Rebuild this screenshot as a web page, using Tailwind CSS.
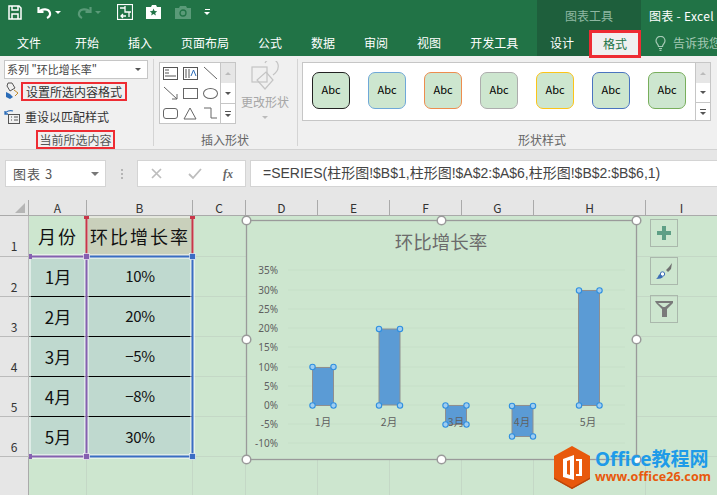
<!DOCTYPE html>
<html lang="zh-CN">
<head>
<meta charset="UTF-8">
<title>图表工具 - Excel</title>
<script src="https://cdn.jsdelivr.net/npm/@tailwindcss/browser@4"></script>
</head>
<body class="w-[717px] h-[495px] overflow-hidden bg-[#e6e6e6] font-['Noto_Sans_CJK_SC','Noto_Sans',sans-serif] text-[#444]">

<!-- title bar + tabs -->
<header class="relative h-[56px] bg-[#217346] text-white">
  <div class="flex items-center h-[28px] pb-[4px] pl-[8px]">
    <svg class="w-[14px] h-[15px]" viewBox="0 0 14 15" fill="none" stroke="#fff" stroke-width="1.5"><path d="M1 1h10l2 2v11H1z"/><path d="M4 1v4h6V1M4 14V9h6v5"/></svg>
    <svg class="ml-[15px] w-[15px] h-[13px]" viewBox="0 0 15 13" fill="none" stroke="#fff" stroke-width="2.2"><path d="M1.500 1v5h5"/><path d="M2 6c3-4 10-3.500 11 1 .4 2-1 4-3 5"/></svg>
    <span class="ml-[3px] border-x-[3px] border-t-[3px] border-x-transparent border-t-white"></span>
    <svg class="ml-[16px] w-[15px] h-[13px]" viewBox="0 0 15 13" fill="none" stroke="#5a9a78" stroke-width="2.200"><path d="M13.500 1v5h-5"/><path d="M13 6C10 2 3 2.500 2 7c-.4 2 1 4 3 5"/></svg>
    <span class="ml-[3px] border-x-[3px] border-t-[3px] border-x-transparent border-t-[#5a9a78]"></span>
    <svg class="ml-[16px] w-[16px] h-[16px]" viewBox="0 0 16 16" fill="none" stroke="#fff"><rect x=".5" y=".5" width="15" height="15" stroke-width="1.200"/><path d="M3 4h5M8 2v6h6M12 8v5M9 12H4m2-2-2 2 2 2" stroke-width="1.300"/></svg>
    <svg class="ml-[13px] w-[15px] h-[14px]" viewBox="0 0 15 14"><path fill="#fff" d="M0 2h5l1-2h4l1 2h4v12H0z"/><path fill="#217346" d="m7.500 3.500 1.100 2.500 2.600.2-2 1.700.7 2.600-2.400-1.400-2.300 1.400.6-2.600-2-1.700 2.700-.2z"/></svg>
    <svg class="ml-[14px] w-[16px] h-[13px]" viewBox="0 0 16 13"><path fill="#5a9a78" d="M0 2h4l1-2h6l1 2h4v11H0z"/><circle cx="8" cy="7" r="3" fill="none" stroke="#217346" stroke-width="1.300"/></svg>
    <span class="ml-[13px] flex flex-col items-center gap-[2px]"><span class="w-[5px] h-px bg-white"></span><span class="border-x-[3px] border-t-[3px] border-x-transparent border-t-white"></span></span>
  </div>
  <nav class="flex h-[28px] text-[12px] leading-[30px] relative">
    <span class="ml-[17px]">文件</span>
    <span class="ml-[34px]">开始</span>
    <span class="ml-[29px]">插入</span>
    <span class="ml-[29px]">页面布局</span>
    <span class="ml-[29px]">公式</span>
    <span class="ml-[29px]">数据</span>
    <span class="ml-[29px]">审阅</span>
    <span class="ml-[29px]">视图</span>
    <span class="ml-[29px]">开发工具</span>
  </nav>
  <!-- contextual chart tools -->
  <div class="absolute left-[537px] top-0 w-[104px] h-[56px] bg-[#1e5f3c]">
    <div class="h-[30px] pl-[28px] text-[12px] leading-[31px] text-[#8fb8a2]">图表工具</div>
    <div class="flex text-[12px]">
      <span class="ml-[13px] leading-[26px]">设计</span>
      <span class="ml-[15px] w-[52px] h-[28px] bg-[#f0f0f0] border-[3px] border-[#ee2c33] text-[#217346] text-center leading-[22px]">格式</span>
    </div>
  </div>
  <div class="absolute left-[649px] top-[8px] text-[12px] leading-[16px] tracking-[.3px] whitespace-nowrap">图表 - Excel</div>
  <div class="absolute left-[655px] top-[35px] flex items-center gap-[7px] text-[12px] leading-[16px] text-[#a5c9b5] whitespace-nowrap">
    <svg class="w-[11px] h-[15px] shrink-0" viewBox="0 0 11 15" fill="none" stroke="#a5c9b5" stroke-width="1.200"><path d="M3.500 10.500C3.500 8 1 7.500 1 4.800a4.500 4.500 0 0 1 9 0c0 2.700-2.500 3.200-2.500 5.700zM4 12.500h3M4.500 14.300h2"/></svg>
    <span>告诉我您</span>
  </div>
</header>

<!-- ribbon -->
<section class="h-[94px] bg-[#f0f0f0] border-b border-[#d2d2d2] flex text-[12px] text-[#444]">
  <div class="w-[154px] shrink-0 border-r border-[#d4d4d4] my-[3px] pl-[4px] flex flex-col">
    <div class="w-[144px] h-[21px] mt-[1px] bg-white border border-[#c6c6c6] flex items-center justify-between pl-[2px] pr-[6px] text-[11px] whitespace-nowrap">
      <span>系列 "环比增长率"</span>
      <span class="border-x-[3px] border-t-[3px] border-x-transparent border-t-[#555]"></span>
    </div>
    <div class="flex items-center h-[19px] mt-[3px]">
      <svg class="w-[16px] h-[18px] shrink-0" viewBox="0 0 16 18"><path fill="none" stroke="#555" d="M4 1l4 0 3 5-5 3-3-5z"/><path fill="#2b6cb8" d="M2 10l4 2 3 3-3 2-4-2z"/><path fill="none" stroke="#c08a2a" d="M10 8l4 3-3 3"/></svg>
      <span class="ml-px h-[19px] px-[3px] border-2 border-[#ee2c33] leading-[16px] whitespace-nowrap text-[#333]">设置所选内容格式</span>
    </div>
    <div class="flex items-center h-[19px] mt-[6px]">
      <svg class="w-[16px] h-[15px] shrink-0" viewBox="0 0 16 15" fill="none"><path stroke="#2b6cb8" stroke-width="1.300" d="M1 5c1-3 5-4 8-3M1 2v3h3"/><rect x="4.500" y="5.500" width="11" height="9" stroke="#555"/><path stroke="#555" d="M7 8h1m2 0h4M7 11h1m2 0h4"/></svg>
      <span class="ml-[5px] leading-[19px] whitespace-nowrap text-[#333]">重设以匹配样式</span>
    </div>
    <div class="mt-[4px] ml-[32px] w-[79px] h-[19px] border-2 border-[#ee2c33] text-center leading-[16px] whitespace-nowrap text-[#555]">当前所选内容</div>
  </div>

  <div class="w-[144px] shrink-0 border-r border-[#d4d4d4] my-[3px] pl-[5px] relative">
    <div class="mt-[3px] flex">
      <div class="w-[62px] h-[62px] bg-white border border-[#c6c6c6] grid grid-cols-3 grid-rows-3 place-items-center">
        <svg class="w-[15px] h-[13px]" viewBox="0 0 15 13" fill="none" stroke="#555"><rect x=".5" y=".5" width="14" height="12"/><path d="M2 3h4M2 6h4M2 9h11"/></svg>
        <svg class="w-[15px] h-[13px]" viewBox="0 0 15 13" fill="none" stroke="#555"><rect x=".5" y=".5" width="14" height="12"/><path d="M3 2v9M6 2v9" /><path stroke="#2b6cb8" d="M8 9l2.500-6L13 9"/></svg>
        <svg class="w-[15px] h-[14px]" viewBox="0 0 15 14" fill="none" stroke="#666"><path d="M1 1l13 12"/></svg>
        <svg class="w-[15px] h-[14px]" viewBox="0 0 15 14" fill="none" stroke="#666"><path d="M1 1l13 12M9 13h5V8"/></svg>
        <span class="w-[15px] h-[11px] border border-[#666]"></span>
        <span class="w-[15px] h-[11px] border border-[#666] rounded-[50%]"></span>
        <span class="w-[15px] h-[11px] border border-[#666] rounded-[3px]"></span>
        <svg class="w-[14px] h-[13px]" viewBox="0 0 14 13" fill="none" stroke="#666"><path d="M7 1l6 11H1z"/></svg>
        <svg class="w-[15px] h-[12px]" viewBox="0 0 15 12" fill="none" stroke="#666"><path d="M1 1h7v10h6"/></svg>
      </div>
      <div class="w-[15px] h-[62px] bg-white border border-l-0 border-[#c6c6c6] flex flex-col">
        <span class="h-[20px] bg-[#e6e6e6] flex items-center justify-center"><span class="border-x-[3px] border-b-[3px] border-x-transparent border-b-[#bbb]"></span></span>
        <span class="h-[21px] border-b border-[#c6c6c6] flex items-center justify-center"><span class="border-x-[3px] border-t-[3px] border-x-transparent border-t-[#555]"></span></span>
        <span class="flex-1 flex flex-col items-center justify-center gap-[2px]"><span class="w-[6px] h-px bg-[#555]"></span><span class="border-x-[3px] border-t-[3px] border-x-transparent border-t-[#555]"></span></span>
      </div>
      <div class="ml-[3px] w-[52px] flex flex-col items-center text-[#a6a6a6]">
        <svg class="w-[30px] h-[30px] mt-[-1px]" viewBox="0 0 30 30" fill="none" stroke="#c4c4c4" stroke-width="1.200"><rect x="2" y="6" width="15" height="15"/><path d="M15 2a7 7 0 0 1 13 5c0 3-5 7-5 7M16 11l7 8-8 9-8-9z"/></svg>
        <span class="mt-[3px] leading-[16px] whitespace-nowrap">更改形状</span>
        <span class="mt-[6px] border-x-[3px] border-t-[3px] border-x-transparent border-t-[#bbb]"></span>
      </div>
    </div>
    <div class="mt-[7px] pl-[42px] leading-[18px] text-[#666]">插入形状</div>
  </div>

  <div class="pl-[4px] my-[3px] flex-1">
    <div class="mt-[3px] flex">
      <div class="w-[394px] h-[59px] bg-white border border-[#c6c6c6] flex items-center gap-[18px] pl-[9px] pb-[3px]">
        <span class="w-[38px] h-[37px] rounded-[7px] bg-[#cde6cf] border-[1.5px] border-[#222] text-[11px] text-center leading-[33px] text-black">Abc</span>
        <span class="w-[38px] h-[37px] rounded-[7px] bg-[#cde6cf] border-[1.5px] border-[#6fa8d8] text-[11px] text-center leading-[33px] text-black">Abc</span>
        <span class="w-[38px] h-[37px] rounded-[7px] bg-[#cde6cf] border-[1.5px] border-[#ed8d4f] text-[11px] text-center leading-[33px] text-black">Abc</span>
        <span class="w-[38px] h-[37px] rounded-[7px] bg-[#cde6cf] border-[1.5px] border-[#adadad] text-[11px] text-center leading-[33px] text-black">Abc</span>
        <span class="w-[38px] h-[37px] rounded-[7px] bg-[#cde6cf] border-[1.5px] border-[#fcc419] text-[11px] text-center leading-[33px] text-black">Abc</span>
        <span class="w-[38px] h-[37px] rounded-[7px] bg-[#cde6cf] border-[1.5px] border-[#4a74c0] text-[11px] text-center leading-[33px] text-black">Abc</span>
        <span class="w-[38px] h-[37px] rounded-[7px] bg-[#cde6cf] border-[1.5px] border-[#78ae5c] text-[11px] text-center leading-[33px] text-black">Abc</span>
      </div>
      <div class="w-[15px] h-[59px] bg-white border border-l-0 border-[#c6c6c6] flex flex-col">
        <span class="h-[20px] bg-[#e6e6e6] flex items-center justify-center"><span class="border-x-[3px] border-b-[3px] border-x-transparent border-b-[#bbb]"></span></span>
        <span class="h-[20px] border-b border-[#c6c6c6] flex items-center justify-center"><span class="border-x-[3px] border-t-[3px] border-x-transparent border-t-[#555]"></span></span>
        <span class="flex-1 flex flex-col items-center justify-center gap-[2px]"><span class="w-[6px] h-px bg-[#555]"></span><span class="border-x-[3px] border-t-[3px] border-x-transparent border-t-[#555]"></span></span>
      </div>
    </div>
    <div class="mt-[10px] pl-[216px] leading-[18px] text-[#666]">形状样式</div>
  </div>
</section>

<!-- formula bar -->
<section class="h-[50px] pt-[10px] pl-[5px] flex text-[#555]">
  <div class="w-[101px] h-[27px] bg-white border border-[#d4d4d4] flex items-center justify-between pl-[7px] pr-[6px] text-[13px] tracking-[1px]">
    <span>图表 3</span>
    <span class="border-x-[4px] border-t-[4px] border-x-transparent border-t-[#777]"></span>
  </div>
  <div class="w-[31px] h-[27px] flex flex-col items-center justify-center gap-[2px]">
    <span class="w-[2px] h-[2px] bg-[#b5b5b5]"></span><span class="w-[2px] h-[2px] bg-[#b5b5b5]"></span><span class="w-[2px] h-[2px] bg-[#b5b5b5]"></span>
  </div>
  <div class="w-[109px] h-[27px] bg-white border border-[#d4d4d4] flex items-center pl-[13px]">
    <svg class="w-[11px] h-[11px]" viewBox="0 0 11 11" stroke="#bdbdbd" stroke-width="1.700"><path d="M1 1l9 9M10 1l-9 9"/></svg>
    <svg class="ml-[26px] w-[14px] h-[12px]" viewBox="0 0 14 12" fill="none" stroke="#bdbdbd" stroke-width="1.800"><path d="M1 6l4 4 8-9"/></svg>
    <span class="ml-[21px] font-['Liberation_Serif',serif] italic font-bold text-[12px] text-[#666]">fx</span>
  </div>
  <div class="ml-[4px] flex-1 h-[27px] bg-white border border-r-0 border-[#d4d4d4] pl-[12px] text-[14px] leading-[25px] whitespace-nowrap overflow-hidden text-[#444] font-['Liberation_Sans','Noto_Sans_CJK_SC',sans-serif]">=SERIES(柱形图!$B$1,柱形图!$A$2:$A$6,柱形图!$B$2:$B$6,1)</div>
</section>

<!-- sheet -->
<section class="relative h-[295px] bg-[#cde6cf]">
  <div class="grid grid-cols-[29px_58px_106px_53px_72px_72px_72px_72px_112px_71px] grid-rows-[16px_41px_40px_40px_40px_40px_40px_38px] h-full text-[#333]">
    <!-- header row -->
    <div class="bg-[#e6e6e6] border-b border-r border-[#aaa] relative"><span class="absolute right-[3px] bottom-[2px] border-l-[10px] border-b-[10px] border-l-transparent border-b-[#b5b5b5]"></span></div>
    <div class="bg-[#e6e6e6] border-b border-r border-[#aaa] text-center text-[12px] leading-[16px]">A</div>
    <div class="bg-[#e6e6e6] border-b border-r border-[#aaa] text-center text-[12px] leading-[16px]">B</div>
    <div class="bg-[#e6e6e6] border-b border-r border-[#aaa] text-center text-[12px] leading-[16px]">C</div>
    <div class="bg-[#e6e6e6] border-b border-r border-[#aaa] text-center text-[12px] leading-[16px]">D</div>
    <div class="bg-[#e6e6e6] border-b border-r border-[#aaa] text-center text-[12px] leading-[16px]">E</div>
    <div class="bg-[#e6e6e6] border-b border-r border-[#aaa] text-center text-[12px] leading-[16px]">F</div>
    <div class="bg-[#e6e6e6] border-b border-r border-[#aaa] text-center text-[12px] leading-[16px]">G</div>
    <div class="bg-[#e6e6e6] border-b border-r border-[#aaa] text-center text-[12px] leading-[16px]">H</div>
    <div class="bg-[#e6e6e6] border-b border-[#aaa] text-center text-[12px] leading-[16px]">I</div>

    <!-- row 1 -->
    <div class="bg-[#e6e6e6] border-b border-r border-[#bbb] text-center text-[12px] leading-[60px]">1</div>
    <div class="flex items-center justify-center text-[18px] tracking-[2px] text-[#111]">月份</div>
    <div class="bg-[#c9d0bb] flex items-center justify-center text-[18px] tracking-[2px] text-[#111] whitespace-nowrap">环比增长率</div>
    <div class="col-span-7 border-b border-[#c4d8c6]"></div>

    <!-- row 2 -->
    <div class="bg-[#e6e6e6] border-b border-r border-[#bbb] text-center text-[12px] leading-[60px]">2</div>
    <div class="bg-[#bfd9cf] border-b border-black flex items-center justify-center text-[17px] text-[#111]">1月</div>
    <div class="bg-[#bfd9cf] border-b border-black flex items-center justify-center text-[15px] tracking-[-.3px] text-[#111]">10%</div>
    <div class="col-span-7 border-b border-[#c4d8c6]"></div>

    <!-- row 3 -->
    <div class="bg-[#e6e6e6] border-b border-r border-[#bbb] text-center text-[12px] leading-[60px]">3</div>
    <div class="bg-[#bfd9cf] border-b border-black flex items-center justify-center text-[17px] text-[#111]">2月</div>
    <div class="bg-[#bfd9cf] border-b border-black flex items-center justify-center text-[15px] tracking-[-.3px] text-[#111]">20%</div>
    <div class="col-span-7 border-b border-[#c4d8c6]"></div>

    <!-- row 4 -->
    <div class="bg-[#e6e6e6] border-b border-r border-[#bbb] text-center text-[12px] leading-[60px]">4</div>
    <div class="bg-[#bfd9cf] border-b border-black flex items-center justify-center text-[17px] text-[#111]">3月</div>
    <div class="bg-[#bfd9cf] border-b border-black flex items-center justify-center text-[15px] tracking-[-.3px] text-[#111]">−5%</div>
    <div class="col-span-7 border-b border-[#c4d8c6]"></div>

    <!-- row 5 -->
    <div class="bg-[#e6e6e6] border-b border-r border-[#bbb] text-center text-[12px] leading-[60px]">5</div>
    <div class="bg-[#bfd9cf] border-b border-black flex items-center justify-center text-[17px] text-[#111]">4月</div>
    <div class="bg-[#bfd9cf] border-b border-black flex items-center justify-center text-[15px] tracking-[-.3px] text-[#111]">−8%</div>
    <div class="col-span-7 border-b border-[#c4d8c6]"></div>

    <!-- row 6 -->
    <div class="bg-[#e6e6e6] border-b border-r border-[#bbb] text-center text-[12px] leading-[60px]">6</div>
    <div class="bg-[#bfd9cf] flex items-center justify-center text-[17px] text-[#111]">5月</div>
    <div class="bg-[#bfd9cf] flex items-center justify-center text-[15px] tracking-[-.3px] text-[#111]">30%</div>
    <div class="col-span-7 border-b border-[#c4d8c6]"></div>

    <!-- below the table -->
    <div class="bg-[#e6e6e6] border-r border-[#aaa]"></div>
    <div class="border-r border-[#c4d8c6]"></div>
    <div class="border-r border-[#c4d8c6]"></div>
    <div class="border-r border-[#c4d8c6]"></div>
    <div class="border-r border-[#c4d8c6]"></div>
    <div class="border-r border-[#c4d8c6]"></div>
    <div class="border-r border-[#c4d8c6]"></div>
    <div class="border-r border-[#c4d8c6]"></div>
    <div class="border-r border-[#c4d8c6]"></div>
    <div></div>
  </div>

  <!-- range highlight lines, y counted from the top of the sheet (y=200) -->
  <svg class="absolute left-0 top-0 w-[717px] h-[295px]" viewBox="0 0 717 295" fill="none">
    <path d="M87 17v40M193 17v40M87 17h106" stroke="#fff" stroke-width="1"/>
    <path d="M30 55h56M30 58h56M88 55h104M88 58h104M30 255h163M30 258h163M85 58v197M88 58v197M191 58v197M194 58v197M30 58v197" stroke="#fff" stroke-width="1"/>
    <path d="M86.500 18v38M192.500 18v38" stroke="#c8374a" stroke-width="2"/>
    <path d="M30 56.500h56M30 256.500h56M86.500 57v199" stroke="#8560b0" stroke-width="2"/>
    <path d="M88 56.500h104M192.500 56v200M88 256.500h104" stroke="#3a6cc4" stroke-width="2"/>
    <rect x="84" y="16" width="5" height="3" fill="#c8374a"/><rect x="190" y="16" width="5" height="3" fill="#c8374a"/>
    <rect x="83.500" y="53.500" width="6" height="6" fill="#8560b0" stroke="#fff" stroke-width=".6"/>
    <rect x="189.500" y="53.500" width="6" height="6" fill="#3a6cc4" stroke="#fff" stroke-width=".6"/>
    <rect x="29" y="54" width="3" height="5" fill="#8560b0"/>
    <rect x="29" y="254" width="3" height="5" fill="#8560b0"/>
    <rect x="83.500" y="253.500" width="6" height="6" fill="#8560b0" stroke="#fff" stroke-width=".6"/>
    <rect x="189.500" y="253.500" width="6" height="6" fill="#3a6cc4" stroke="#fff" stroke-width=".6"/>
  </svg>

  <!-- chart, free canvas in page coordinates -->
  <svg class="absolute left-[240px] top-[15px] w-[404px] h-[250px] font-['Noto_Sans','Noto_Sans_CJK_SC',sans-serif]" viewBox="240 215 404 250">
    <rect x="246.500" y="220.500" width="390" height="239" fill="#cde6cf" stroke="#9a9a9a" stroke-width="1.300"/>
    <g stroke="#c6dfc8">
      <path d="M288 270h337M288 290h337M288 309h337M288 328h337M288 347h337M288 367h337M288 386h337M288 424h337M288 443h337M288 405h337"/>
    </g>
    <text x="441" y="249" text-anchor="middle" font-size="18.500" fill="#6b6b6b" font-family="Noto Sans CJK SC">环比增长率</text>
    <g font-size="10" fill="#5f5f5f" text-anchor="end">
      <text x="278" y="274">35%</text><text x="278" y="294">30%</text><text x="278" y="313">25%</text><text x="278" y="332">20%</text><text x="278" y="351">15%</text><text x="278" y="371">10%</text><text x="278" y="390">5%</text><text x="278" y="409">0%</text><text x="278" y="428">-5%</text><text x="278" y="447">-10%</text>
    </g>
    <g fill="#5b9bd5" stroke="#8f8f8f" stroke-width="1">
      <rect x="312.500" y="367.500" width="21" height="38"/>
      <rect x="379" y="329" width="21" height="76"/>
      <rect x="445.500" y="405.500" width="21" height="19"/>
      <rect x="512" y="405.500" width="21" height="31"/>
      <rect x="578.500" y="290.500" width="21" height="115"/>
    </g>
    <g font-size="10.500" fill="#5f5f5f" text-anchor="middle" font-family="Noto Sans CJK SC">
      <text x="323" y="426">1月</text><text x="389" y="426">2月</text><text x="456" y="426">3月</text><text x="522" y="426">4月</text><text x="588" y="426">5月</text>
    </g>
    <g fill="#9fcdf0" stroke="#2f8fe0" stroke-width="1.100">
      <circle cx="312.500" cy="367" r="2.700"/><circle cx="333.500" cy="367" r="2.700"/><circle cx="312.500" cy="405.500" r="2.700"/><circle cx="333.500" cy="405.500" r="2.700"/>
      <circle cx="379" cy="329" r="2.700"/><circle cx="400" cy="329" r="2.700"/><circle cx="379" cy="405.500" r="2.700"/><circle cx="400" cy="405.500" r="2.700"/>
      <circle cx="445.500" cy="405.500" r="2.700"/><circle cx="466.500" cy="405.500" r="2.700"/><circle cx="445.500" cy="424.500" r="2.700"/><circle cx="466.500" cy="424.500" r="2.700"/>
      <circle cx="512" cy="406" r="2.700"/><circle cx="533" cy="406" r="2.700"/><circle cx="512" cy="436.500" r="2.700"/><circle cx="533" cy="436.500" r="2.700"/>
      <circle cx="579" cy="290.500" r="2.700"/><circle cx="599.500" cy="290.500" r="2.700"/><circle cx="579" cy="405.500" r="2.700"/><circle cx="599.500" cy="405.500" r="2.700"/>
    </g>
    <g fill="#fff" stroke="#9a9a9a" stroke-width="1.500">
      <circle cx="246.500" cy="220.500" r="4.300"/><circle cx="441.500" cy="220.500" r="4.300"/><circle cx="636.500" cy="220.500" r="4.300"/>
      <circle cx="246.500" cy="339.500" r="4.300"/><circle cx="636.500" cy="339.500" r="4.300"/>
      <circle cx="246.500" cy="459.500" r="4.300"/><circle cx="441.500" cy="459.500" r="4.300"/><circle cx="636.500" cy="459.500" r="4.300"/>
    </g>
  </svg>

  <!-- chart side buttons -->
  <div class="absolute left-[650px] top-[19px] flex flex-col gap-[10px]">
    <span class="w-[28px] h-[28px] border border-[#aab8ac] flex items-center justify-center">
      <svg class="w-[14px] h-[14px]" viewBox="0 0 14 14"><path fill="#5f9f86" d="M5 0h4v5h5v4H9v5H5V9H0V5h5z"/></svg>
    </span>
    <span class="w-[28px] h-[28px] border border-[#aab8ac] flex items-center justify-center">
      <svg class="w-[18px] h-[18px]" viewBox="0 0 18 18"><path fill="#707070" d="M17 1l-1 6-3 3-2-2 3-3z"/><circle cx="7.500" cy="12" r="2.200" fill="#fff" stroke="#3d6fb5"/><path fill="#3d6fb5" d="M1 17c2-1 2-4 4-5l3 3c-1 1-3 2-7 2z"/></svg>
    </span>
    <span class="w-[28px] h-[28px] border border-[#aab8ac] flex items-center justify-center">
      <svg class="w-[18px] h-[18px]" viewBox="0 0 18 18"><path fill="#7a7a7a" d="M0 1h18v2l-6 6v8l-5 0V9L1 3z"/><path fill="#cde6cf" d="M3 3h12l-5 4H8z"/></svg>
    </span>
  </div>

  <!-- watermark -->
  <div class="absolute left-[554px] top-[246px] flex">
    <svg class="w-[36px] h-[43px] shrink-0" viewBox="0 0 36 43"><path fill="#e8590c" d="M18 0l18 10v23L18 43 0 33V10z"/><path fill="#b8450a" d="M0 33l18 10 18-10v-1.500L18 41.500 0 31.500z"/><path fill="#fff" d="M9 13l11-4v25L9 31zm13 0h6v17h-6v-2h3V15h-3z"/><path fill="#e8590c" d="M13 15l3-1v15l-3-1z"/></svg>
    <div class="ml-[5px] mt-[3px] font-['Noto_Sans','Noto_Sans_CJK_SC',sans-serif] font-bold whitespace-nowrap">
      <div class="text-[19px] h-[21px] leading-[21px] text-[#1e9be8]">Office教程网</div>
      <div class="text-[12.500px] h-[14px] leading-[14px] tracking-[.1px] text-[#e8590c]">www.office26.com</div>
    </div>
  </div>
</section>
</body>
</html>
